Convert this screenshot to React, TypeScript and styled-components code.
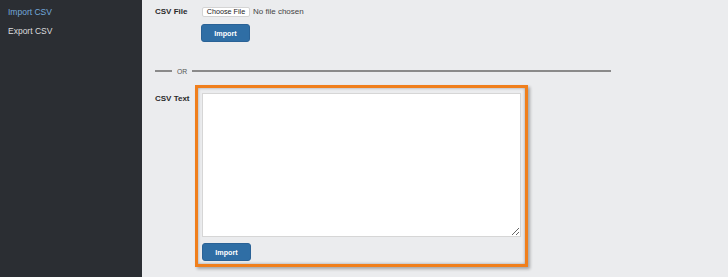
import React from 'react';
import styled, { createGlobalStyle } from 'styled-components';

const GlobalStyle = createGlobalStyle`
  html, body {
    margin: 0;
    padding: 0;
    background: #ebecee;
    font-family: "Liberation Sans", Arial, sans-serif;
  }
`;

const Page = styled.div`
  display: flex;
  width: 728px;
  height: 277px;
  overflow: hidden;
`;

const Sidebar = styled.nav`
  width: 142px;
  flex-shrink: 0;
  background: #2b2e33;
  padding-top: 7px;
  display: flex;
  flex-direction: column;
  gap: 8px;
`;

const NavItem = styled.a<{ $active?: boolean }>`
  display: block;
  padding-left: 8px;
  font-size: 8.5px;
  line-height: 11px;
  color: ${(p) => (p.$active ? '#73a9dc' : '#dcdddf')};
  cursor: pointer;
`;

const Main = styled.main`
  flex: 1;
  padding: 7px 0 0 13px;
  display: flex;
  flex-direction: column;
`;

const Row = styled.div`
  display: flex;
  align-items: flex-start;
`;

const Label = styled.label<{ $width: number; $top?: number }>`
  width: ${(p) => p.$width}px;
  flex-shrink: 0;
  padding-top: ${(p) => p.$top ?? 0}px;
  font-size: 8px;
  line-height: 10px;
  font-weight: bold;
  color: #2a2a2a;
  white-space: nowrap;
`;

const FilePicker = styled.div`
  display: flex;
  align-items: center;
  gap: 3px;
  font-size: 8px;
  line-height: 10px;
  color: #444;
  white-space: nowrap;
`;

const FileButton = styled.button`
  box-sizing: border-box;
  height: 10px;
  width: 48px;
  padding: 0;
  background: #fff;
  border: 1px solid #d4d4d4;
  border-radius: 2px;
  font-family: inherit;
  font-size: 7.2px;
  line-height: 8px;
  color: #222;
  white-space: nowrap;
`;

const ImportButton = styled.button`
  display: block;
  width: 49px;
  height: 18px;
  padding: 0;
  background: #2f6ea5;
  border: 1px solid #2a6296;
  border-radius: 3px;
  color: #fff;
  font-family: inherit;
  font-size: 7.2px;
  font-weight: bold;
`;

const Indent = styled.div`
  display: flex;
  padding-left: 46px;
  margin-top: 7px;
`;

const Divider = styled.div`
  display: flex;
  align-items: center;
  width: 456px;
  height: 8px;
  margin-top: 25px;
  gap: 5px;
  font-size: 6.8px;
  color: #555;
  &::before,
  &::after {
    content: '';
    height: 2px;
    background: #8a8a8a;
  }
  &::before {
    width: 17px;
  }
  &::after {
    flex: 1;
  }
`;

const Highlight = styled.div`
  box-sizing: border-box;
  width: 333px;
  height: 182px;
  border: 3px solid #f07f1c;
  box-shadow: inset 0 0 3px rgba(0, 0, 0, 0.35), 2px 2px 3px rgba(0, 0, 0, 0.3);
  padding: 5px 4px 3px 4px;
  display: flex;
  flex-direction: column;
  gap: 6px;
`;

const TextArea = styled.textarea`
  box-sizing: border-box;
  display: block;
  width: 319px;
  height: 144px;
  margin: 0;
  border: 1px solid #d6d6d6;
  background: #fff;
  resize: both;
  font-family: inherit;
`;

const TextRow = styled(Row)`
  margin-top: 10px;
`;

export default function App() {
  return (
    <Page>
      <GlobalStyle />
      <Sidebar>
        <NavItem $active>Import CSV</NavItem>
        <NavItem>Export CSV</NavItem>
      </Sidebar>
      <Main>
        <Row>
          <Label $width={47}>CSV File</Label>
          <FilePicker>
            <FileButton>Choose File</FileButton>
            <span>No file chosen</span>
          </FilePicker>
        </Row>
        <Indent>
          <ImportButton>Import</ImportButton>
        </Indent>
        <Divider>OR</Divider>
        <TextRow>
          <Label $width={40} $top={9}>CSV Text</Label>
          <Highlight>
            <TextArea />
            <ImportButton>Import</ImportButton>
          </Highlight>
        </TextRow>
      </Main>
    </Page>
  );
}
